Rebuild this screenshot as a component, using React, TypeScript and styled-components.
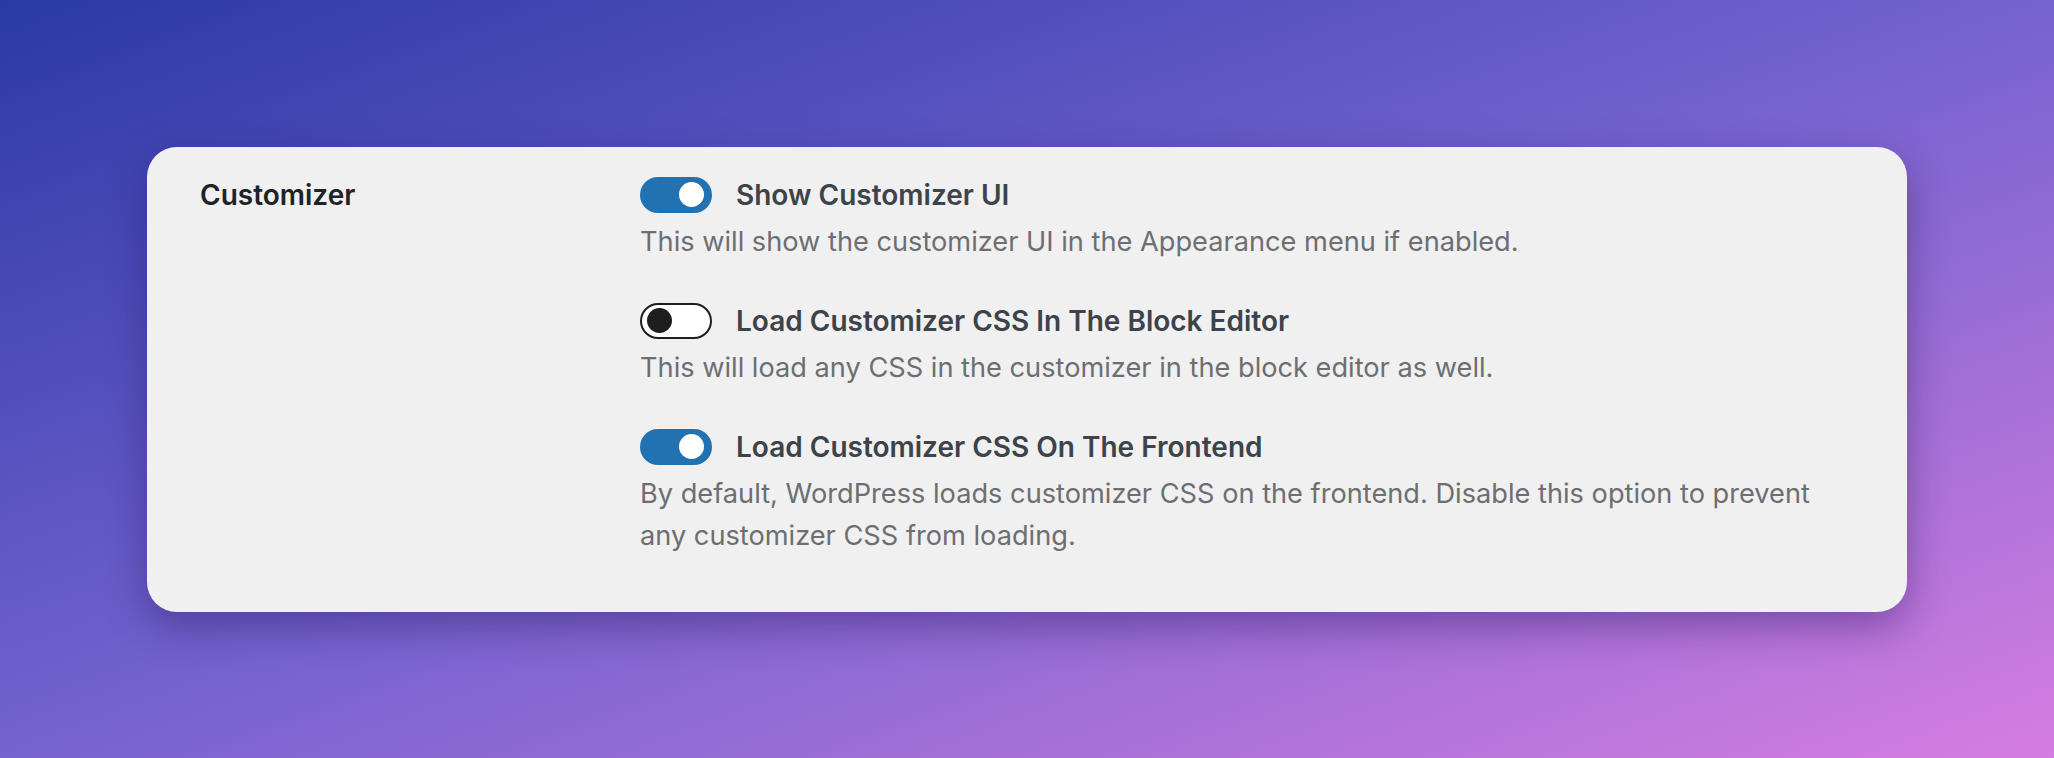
import React from 'react'
import styled, { createGlobalStyle } from 'styled-components'

type Setting = {
  title: string
  description: string
  enabled: boolean
}

const settings: Setting[] = [
  {
    title: 'Show Customizer UI',
    description: 'This will show the customizer UI in the Appearance menu if enabled.',
    enabled: true,
  },
  {
    title: 'Load Customizer CSS In The Block Editor',
    description: 'This will load any CSS in the customizer in the block editor as well.',
    enabled: false,
  },
  {
    title: 'Load Customizer CSS On The Frontend',
    description:
      'By default, WordPress loads customizer CSS on the frontend. Disable this option to prevent any customizer CSS from loading.',
    enabled: true,
  },
]

const GlobalStyle = createGlobalStyle`
  html, body {
    margin: 0;
    padding: 0;
  }

  body {
    font-family: Inter, "Noto Sans", "Liberation Sans", sans-serif;
    -webkit-font-smoothing: antialiased;
  }
`

const Page = styled.div`
  width: 2054px;
  height: 758px;
  display: flex;
  align-items: center;
  justify-content: center;
  background: linear-gradient(to bottom right, #2a39a7 0%, #7563cf 50%, #d57de1 100%);
  overflow: hidden;
`

const Card = styled.section`
  width: 1760px;
  box-sizing: border-box;
  padding: 30px 53px 55px;
  display: grid;
  grid-template-columns: 440px 1fr;
  background: #f0f0f0;
  border-radius: 30px;
  box-shadow: 0 14px 40px rgba(45, 25, 95, 0.45);
`

const SectionLabel = styled.h2`
  margin: 0;
  font-size: 28px;
  line-height: 36px;
  font-weight: 600;
  color: #1d2327;
`

const Options = styled.div`
  display: flex;
  flex-direction: column;
  gap: 40px;
`

const Option = styled.div`
  display: flex;
  flex-direction: column;
  gap: 8px;
`

const OptionHeader = styled.label`
  display: flex;
  align-items: center;
  gap: 24px;
`

const Toggle = styled.span<{ $on: boolean }>`
  width: 72px;
  height: 36px;
  box-sizing: border-box;
  flex-shrink: 0;
  display: flex;
  align-items: center;
  justify-content: ${(p) => (p.$on ? 'flex-end' : 'flex-start')};
  padding: 0 ${(p) => (p.$on ? '8px' : '5px')};
  border-radius: 18px;
  background: ${(p) => (p.$on ? '#2271b1' : '#ffffff')};
  border: ${(p) => (p.$on ? 'none' : '2.5px solid #1e1e1e')};
`

const Knob = styled.span<{ $on: boolean }>`
  width: 25px;
  height: 25px;
  border-radius: 50%;
  background: ${(p) => (p.$on ? '#ffffff' : '#1e1e1e')};
`

const OptionTitle = styled.span`
  font-size: 28px;
  line-height: 36px;
  font-weight: 600;
  color: #3c434a;
`

const Description = styled.p`
  margin: 0;
  max-width: 1190px;
  font-size: 27.2px;
  line-height: 42px;
  font-weight: 400;
  color: #6c6e71;
`

const App: React.FC = () => {
  return (
    <Page>
      <GlobalStyle />
      <Card>
        <SectionLabel>Customizer</SectionLabel>
        <Options>
          {settings.map((s) => (
            <Option key={s.title}>
              <OptionHeader>
                <Toggle $on={s.enabled} role="switch" aria-checked={s.enabled}>
                  <Knob $on={s.enabled} />
                </Toggle>
                <OptionTitle>{s.title}</OptionTitle>
              </OptionHeader>
              <Description>{s.description}</Description>
            </Option>
          ))}
        </Options>
      </Card>
    </Page>
  )
}

export default App
